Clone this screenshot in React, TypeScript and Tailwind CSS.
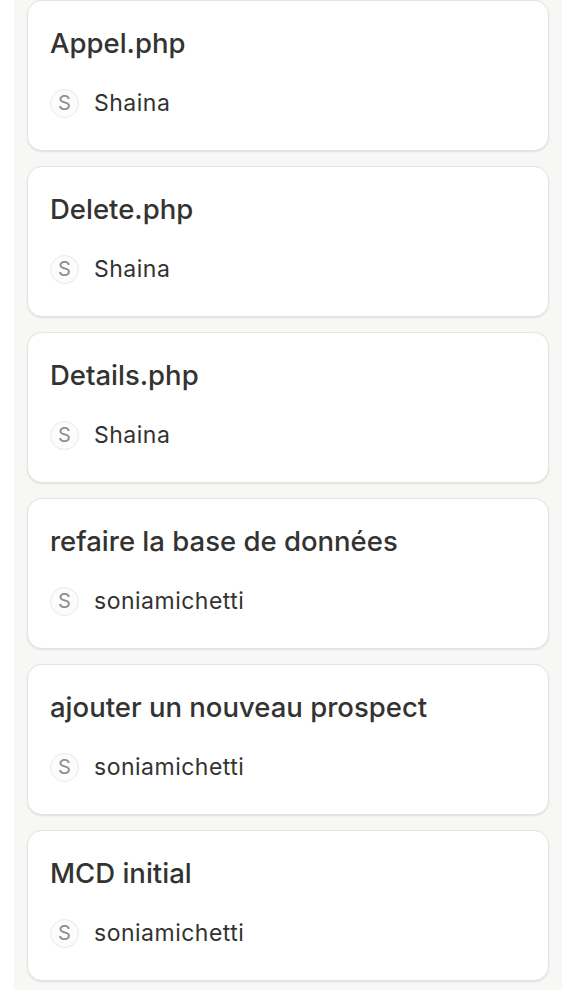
import React from "react";

const items = [
  { title: "Appel.php", user: "Shaina" },
  { title: "Delete.php", user: "Shaina" },
  { title: "Details.php", user: "Shaina" },
  { title: "refaire la base de données", user: "soniamichetti" },
  { title: "ajouter un nouveau prospect", user: "soniamichetti" },
  { title: "MCD initial", user: "soniamichetti" },
];

export default function App() {
  return (
    <div className="w-[576px] h-[990px] bg-white overflow-hidden" style={{ fontFamily: "Inter, 'Noto Sans', sans-serif" }}>
      <div className="mx-[14px] w-[548px] h-[990px] bg-[#f7f7f5] px-[13px] pb-[10px] flex flex-col gap-[15px]">
        {items.map((it) => (
          <div
            key={it.title}
            className="h-[151px] shrink-0 bg-white rounded-[15px] border border-[#e4e4e2] shadow-[0_1px_2px_rgba(0,0,0,0.1)] px-[22px] pt-[24px]"
          >
            <div className="text-[27.5px] leading-[36px] font-medium text-[#333331]">{it.title}</div>
            <div className="mt-[27px] flex items-center gap-[15px]">
              <div className="w-[29px] h-[29px] rounded-full border border-[#e8e8e6] bg-[#fcfcfc] flex items-center justify-center text-[20px] text-[#8e8e8c]">
                S
              </div>
              <div className="text-[23px] leading-[30px] tracking-[0.5px] text-[#333331]">{it.user}</div>
            </div>
          </div>
        ))}
      </div>
    </div>
  );
}
